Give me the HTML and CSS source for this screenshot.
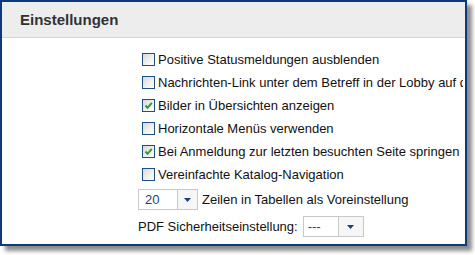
FILE: index.html
```html
<!DOCTYPE html>
<html>
<head>
<meta charset="utf-8">
<link rel="stylesheet" href="styles.css">
</head>
<body>
<div class="frame">
  <div class="header"><h1 class="title">Einstellungen</h1></div>
  <div class="content">
    <div class="form">
      <label class="row"><span class="cb"></span><span class="lbl">Positive Statusmeldungen ausblenden</span></label>
      <label class="row"><span class="cb"></span><span class="lbl">Nachrichten-Link unter dem Betreff in der Lobby auf der Startseite anzeigen</span></label>
      <label class="row"><span class="cb checked"><svg viewBox="0 0 11 11" width="11" height="11"><path d="M2.5 5.5 L4.6 7.8 L8.8 2.8" fill="none" stroke="#27a127" stroke-width="2"/></svg></span><span class="lbl">Bilder in Übersichten anzeigen</span></label>
      <label class="row"><span class="cb"></span><span class="lbl">Horizontale Menüs verwenden</span></label>
      <label class="row"><span class="cb checked"><svg viewBox="0 0 11 11" width="11" height="11"><path d="M2.5 5.5 L4.6 7.8 L8.8 2.8" fill="none" stroke="#27a127" stroke-width="2"/></svg></span><span class="lbl">Bei Anmeldung zur letzten besuchten Seite springen</span></label>
      <label class="row"><span class="cb"></span><span class="lbl">Vereinfachte Katalog-Navigation</span></label>
      <div class="row sel-row">
        <span class="select sel-20"><span class="val">20</span><span class="btn"><svg viewBox="0 0 7 4" width="7" height="4"><path d="M0 0 H7 L3.5 4 Z" fill="#1b3f7d"/></svg></span></span>
        <span class="lbl">Zeilen in Tabellen als Voreinstellung</span>
      </div>
      <div class="row pdf-row">
        <span class="lbl">PDF Sicherheitseinstellung:</span>
        <span class="select sel-pdf"><span class="val">---</span><span class="btn"><svg viewBox="0 0 7 4" width="7" height="4"><path d="M0 0 H7 L3.5 4 Z" fill="#1b3f7d"/></svg></span></span>
      </div>
    </div>
  </div>
</div>
</body>
</html>
```

FILE: styles.css
```css
html, body {
  margin: 0;
  padding: 0;
  background: #fff;
}
body {
  font-family: "Liberation Sans", Arial, sans-serif;
  width: 475px;
  height: 255px;
  overflow: hidden;
}
.frame {
  width: 463px;
  height: 242px;
  border: 2px solid #0c3a7c;
  background: #fff;
  box-shadow: 5px 5px 4px rgba(0, 0, 0, 0.45);
  display: flex;
  flex-direction: column;
  overflow: hidden;
}
.header {
  height: 35px;
  background: #ededed;
  border-bottom: 1px solid #d4d4d4;
  display: flex;
  align-items: center;
  padding-left: 18px;
}
.title {
  margin: 0;
  font-size: 15px;
  font-weight: bold;
  color: #333;
  line-height: 18px;
}
.content {
  flex: 1;
  padding: 10px 2px 0 136px;
  overflow: hidden;
}
.form {
  display: flex;
  flex-direction: column;
  overflow: hidden;
}
.row {
  height: 23px;
  display: flex;
  align-items: center;
  white-space: nowrap;
  font-size: 13px;
  color: #111;
}
.cb {
  flex: none;
  width: 11px;
  height: 11px;
  margin-left: 4px;
  margin-right: 3px;
  border: 1px solid #1d4f84;
  background: linear-gradient(135deg, #d8d8d4 0%, #f2f2f0 60%, #fff 100%);
  display: flex;
}
.lbl {
  line-height: 15px;
}
.sel-row {
  margin-top: 2px;
}
.pdf-row {
  margin-top: 4px;
}
.select {
  flex: none;
  display: flex;
  height: 19px;
  border: 1px solid #c8c8c8;
  background: #fff;
}
.select .val {
  flex: 1;
  color: #1b3f7d;
  font-size: 13px;
  line-height: 19px;
  padding-left: 6px;
}
.select .btn {
  width: 19px;
  border-left: 1px solid #c8c8c8;
  background: #f6f6f6;
  display: flex;
  align-items: center;
  justify-content: center;
}
.sel-20 {
  width: 58px;
  margin-right: 4px;
}
.sel-pdf {
  width: 59px;
  margin-left: 5px;
}
.sel-pdf .val {
  padding-left: 4px;
}
.sel-pdf .btn {
  width: 24px;
}
```
